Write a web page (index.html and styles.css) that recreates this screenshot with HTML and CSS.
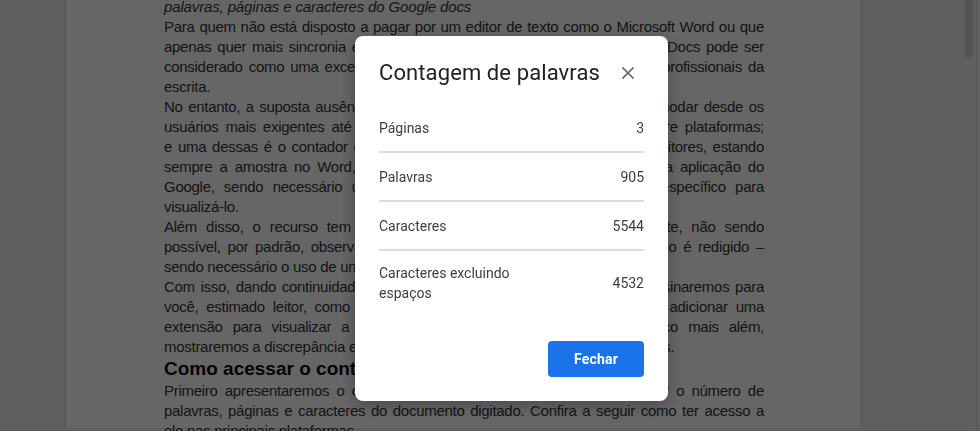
FILE: index.html
```html
<!DOCTYPE html>
<html lang="pt-BR">
<head>
<meta charset="utf-8">
<title>Contagem de palavras</title>
<link rel="stylesheet" href="styles.css">
</head>
<body>
<div class="app">
  <main class="canvas">
    <article class="page">
      <div class="doc">
        <p class="para">
          <span class="ln italic end">palavras, páginas e caracteres do Google docs</span>
        </p>
        <p class="para">
          <span class="ln">Para quem não está disposto a pagar por um editor de texto como o Microsoft Word ou que</span>
          <span class="ln">apenas quer mais sincronia entre os seus diferentes dispositivos, o Google Docs pode ser</span>
          <span class="ln">considerado como uma excelente alternativa para estudantes, escritores e profissionais da</span>
          <span class="ln end">escrita.</span>
        </p>
        <p class="para">
          <span class="ln">No entanto, a suposta ausência de recursos que o editor possui pode incomodar desde os</span>
          <span class="ln">usuários mais exigentes até aqueles que estão acostumados a migrar entre plataformas;</span>
          <span class="ln">e uma dessas é o contador de palavras, presente na maioria dos outros editores, estando</span>
          <span class="ln">sempre a amostra no Word, contudo, ele permanece oculto por padrão na aplicação do</span>
          <span class="ln">Google, sendo necessário utilizar um atalho ou acessar o seu menu específico para</span>
          <span class="ln end">visualizá-lo.</span>
        </p>
        <p class="para">
          <span class="ln">Além disso, o recurso tem uma grande limitação, que atrapalha bastante, não sendo</span>
          <span class="ln">possível, por padrão, observar a contagem em tempo real enquanto o texto é redigido –</span>
          <span class="ln end">sendo necessário o uso de uma extensão.</span>
        </p>
        <p class="para">
          <span class="ln">Com isso, dando continuidade ao nosso guia de dicas do Google Docs, ensinaremos para</span>
          <span class="ln">você, estimado leitor, como acessar o contador nativo do editor e como adicionar uma</span>
          <span class="ln">extensão para visualizar a contagem total em tempo real. E um pouco mais além,</span>
          <span class="ln end">mostraremos a discrepância entre as contagens registradas pelos dois editores.</span>
        </p>
        <h2 class="heading">Como acessar o contador de palavras</h2>
        <p class="para">
          <span class="ln">Primeiro apresentaremos o caminho que deve ser percorrido para verificar o número de</span>
          <span class="ln">palavras, páginas e caracteres do documento digitado. Confira a seguir como ter acesso a</span>
          <span class="ln end">ele nas principais plataformas.</span>
        </p>
      </div>
    </article>
  </main>
  <aside class="scrollbar" aria-hidden="true">
    <div class="thumb"></div>
    <div class="rail"></div>
  </aside>
</div>

<div class="overlay">
  <section class="dialog" role="dialog" aria-labelledby="dlg-title">
    <header class="dialog-head">
      <h1 id="dlg-title" class="dialog-title">Contagem de palavras</h1>
      <button class="close" type="button" aria-label="Fechar">
        <svg width="12" height="12" viewBox="0 0 12 12" aria-hidden="true">
          <path d="M1 1 L11 11 M11 1 L1 11" stroke="#5f6368" stroke-width="1.6" fill="none" stroke-linecap="square"/>
        </svg>
      </button>
    </header>
    <div class="rows">
      <div class="row"><span class="label">Páginas</span><span class="value">3</span></div>
      <div class="row"><span class="label">Palavras</span><span class="value">905</span></div>
      <div class="row"><span class="label">Caracteres</span><span class="value">5544</span></div>
      <div class="row"><span class="label narrow">Caracteres excluindo espaços</span><span class="value">4532</span></div>
    </div>
    <footer class="dialog-foot">
      <button class="primary" type="button">Fechar</button>
    </footer>
  </section>
</div>
</body>
</html>
```
FILE: styles.css
```css
* { box-sizing: border-box; }

html, body {
  margin: 0;
  height: 100%;
  overflow: hidden;
}

body {
  font-family: "Liberation Sans", Arial, sans-serif;
  background: #ededed;
}

.app {
  display: flex;
  height: 100vh;
}

.canvas {
  flex: 1;
  padding-left: 65px;
  overflow: hidden;
  background: #ececec;
}

.page {
  width: 797px;
  height: 100%;
  background: #ffffff;
  border-left: 1px solid #d6d6d6;
  border-right: 1px solid #d6d6d6;
  padding: 0 97px 0 98px;
}

.doc {
  width: 600px;
  margin-top: -3px;
  color: #363636;
  font-size: 15px;
  line-height: 20px;
  letter-spacing: -0.28px;
}

.para {
  margin: 0;
}

.ln {
  display: block;
  text-align: justify;
  text-align-last: justify;
}

.ln.end {
  text-align-last: left;
}

.italic {
  font-style: italic;
  letter-spacing: -0.14px;
}

.heading {
  margin: 0;
  font-size: 19px;
  line-height: 24px;
  font-weight: 700;
  color: #0a0a0a;
  letter-spacing: 0;
}

.scrollbar {
  width: 15px;
  flex: none;
  display: flex;
  background: #ededed;
}

.thumb {
  width: 8px;
  height: 58px;
  background: #d3d3d3;
  border-radius: 0 0 4px 4px;
}

.rail {
  width: 1px;
  margin-left: 3px;
  background: #dcdcdc;
}

.overlay {
  position: fixed;
  inset: 0;
  background: rgba(0, 0, 0, 0.6);
  display: flex;
  align-items: flex-start;
  padding: 36px 0 0 355px;
}

.dialog {
  width: 313px;
  background: #ffffff;
  border-radius: 8px;
  box-shadow: 0 4px 16px rgba(0, 0, 0, 0.3);
  padding: 21px 24px 24px;
  font-family: Roboto, "Liberation Sans", sans-serif;
  color: #3c4043;
}

.dialog-head {
  display: flex;
  align-items: center;
  justify-content: space-between;
  height: 32px;
  margin-bottom: 15px;
}

.dialog-title {
  margin: 0;
  font-family: Roboto, "Open Sans", sans-serif;
  font-weight: 400;
  font-size: 22px;
  line-height: 32px;
  letter-spacing: 0.1px;
  color: #202124;
}

.close {
  width: 32px;
  height: 32px;
  padding: 0;
  border: 0;
  background: transparent;
  display: flex;
  align-items: center;
  justify-content: center;
}

.rows {
  display: flex;
  flex-direction: column;
}

.row {
  display: flex;
  align-items: center;
  justify-content: space-between;
  min-height: 49px;
  padding: 12px 0;
  font-size: 14px;
  line-height: 20px;
  border-bottom: 2px solid #dadce0;
}

.row:last-child {
  border-bottom: 0;
  min-height: 47px;
}

.label.narrow {
  max-width: 150px;
}

.dialog-foot {
  display: flex;
  justify-content: flex-end;
  margin-top: 26px;
}

.primary {
  height: 36px;
  padding: 0 26px;
  border: 0;
  border-radius: 4px;
  background: #1a73e8;
  color: #ffffff;
  font-family: Roboto, "Liberation Sans", sans-serif;
  font-size: 14px;
  font-weight: 700;
  letter-spacing: 0.2px;
}
```
